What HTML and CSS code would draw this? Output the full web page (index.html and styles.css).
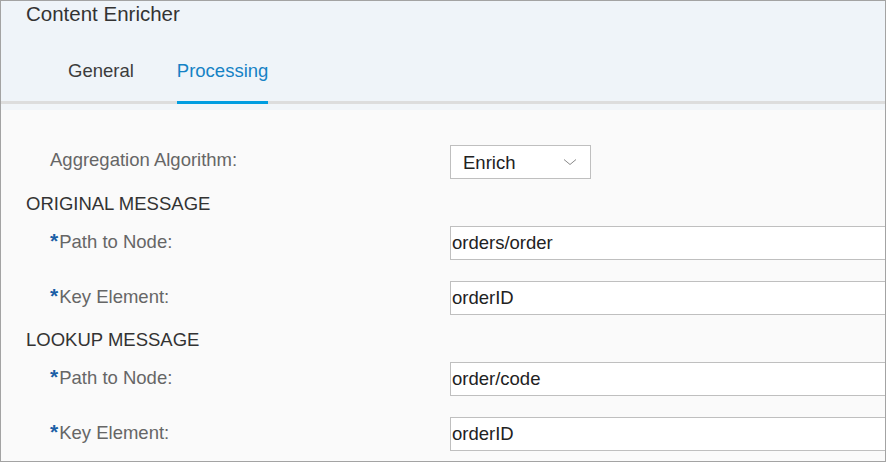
FILE: index.html
```html
<!DOCTYPE html>
<html>
<head>
<meta charset="utf-8">
<link rel="stylesheet" href="styles.css">
</head>
<body>
<div class="panel">
  <div class="header">
    <div class="title">Content Enricher</div>
    <div class="tabs">
      <div class="tab">General</div>
      <div class="tab active">Processing</div>
    </div>
  </div>
  <div class="content">
    <div class="row">
      <div class="label">Aggregation Algorithm:</div>
      <div class="select">
        <span>Enrich</span>
        <svg class="chev" width="14" height="8" viewBox="0 0 14 8"><path d="M1 1.5 L7 6.5 L13 1.5" fill="none" stroke="#8a8a8a" stroke-width="1"/></svg>
      </div>
    </div>
    <div class="section">ORIGINAL MESSAGE</div>
    <div class="row first">
      <div class="label"><span class="req">*</span>Path to Node:</div>
      <div class="input">orders/order</div>
    </div>
    <div class="row next">
      <div class="label"><span class="req">*</span>Key Element:</div>
      <div class="input">orderID</div>
    </div>
    <div class="section">LOOKUP MESSAGE</div>
    <div class="row first">
      <div class="label"><span class="req">*</span>Path to Node:</div>
      <div class="input">order/code</div>
    </div>
    <div class="row next">
      <div class="label"><span class="req">*</span>Key Element:</div>
      <div class="input">orderID</div>
    </div>
  </div>
</div>
</body>
</html>
```
FILE: styles.css
```css
* { box-sizing: border-box; }
html, body { margin: 0; padding: 0; }
body {
  font-family: "Liberation Sans", Arial, sans-serif;
  background: #fafafa;
}
.panel {
  width: 886px;
  height: 462px;
  border: 1px solid #a3a3a3;
  overflow: hidden;
  background: #fafafa;
}
.header {
  background: #eff4f9;
  padding: 1px 0 0 25px;
  border-bottom: 3px solid #dddddd;
}
.title {
  font-size: 20.5px;
  line-height: 24px;
  color: #333333;
}
.tabs {
  display: flex;
  gap: 43px;
  margin-top: 34px;
  padding-left: 42px;
  margin-bottom: -3px;
}
.tab {
  font-size: 18.5px;
  line-height: 22px;
  color: #3c3c3c;
  padding-bottom: 19px;
  border-bottom: 3px solid transparent;
}
.tab.active {
  color: #1582c5;
  border-bottom-color: #009de0;
}
.content {
  border-top: 6px solid #f1f5f9;
  padding: 35px 0 0 25px;
}
.row {
  display: flex;
  align-items: flex-start;
}
.row.first { margin-top: 11px; }
.row.next { margin-top: 21px; }
.label {
  width: 424px;
  flex: none;
  padding-left: 24px;
  padding-top: 4px;
  font-size: 18.5px;
  line-height: 22px;
  color: #666666;
}
.req {
  color: #1b5fa6;
  font-weight: bold;
  font-size: 21px;
  margin-right: 1px;
}
.section {
  margin-top: 14px;
  font-size: 18.5px;
  line-height: 22px;
  color: #333333;
}
.input, .select {
  height: 34px;
  border: 1px solid #bfbfbf;
  background: #ffffff;
  font-size: 18.5px;
  line-height: 32px;
  color: #222222;
  flex: none;
}
.input {
  width: 470px;
  padding-left: 1px;
}
.select {
  width: 141px;
  padding-left: 12px;
  display: flex;
  align-items: center;
  justify-content: space-between;
  padding-right: 13px;
}
.select span { line-height: 32px; padding-top: 1px; }
.chev { display: block; }
```
